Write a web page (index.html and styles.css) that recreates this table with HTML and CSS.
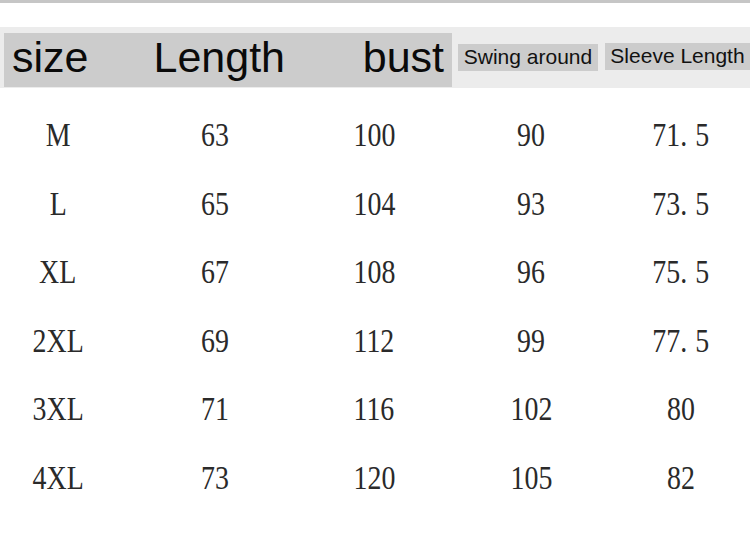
FILE: index.html
```html
<!DOCTYPE html>
<html>
<head>
<meta charset="utf-8">
<link rel="stylesheet" href="styles.css">
</head>
<body>
<div class="topline"></div>
<div class="header">
  <div class="bigbox">
    <span class="h-size">size</span>
    <span class="h-length">Length</span>
    <span class="h-bust">bust</span>
  </div>
  <div class="smallbox swing">Swing around</div>
  <div class="smallbox sleeve">Sleeve Length</div>
</div>
<div class="table">
  <div class="cell"><span>M</span></div><div class="cell"><span>63</span></div><div class="cell"><span>100</span></div><div class="cell"><span>90</span></div><div class="cell"><span>71<i class="dot">.</i>5</span></div>
  <div class="cell"><span>L</span></div><div class="cell"><span>65</span></div><div class="cell"><span>104</span></div><div class="cell"><span>93</span></div><div class="cell"><span>73<i class="dot">.</i>5</span></div>
  <div class="cell"><span>XL</span></div><div class="cell"><span>67</span></div><div class="cell"><span>108</span></div><div class="cell"><span>96</span></div><div class="cell"><span>75<i class="dot">.</i>5</span></div>
  <div class="cell"><span>2XL</span></div><div class="cell"><span>69</span></div><div class="cell"><span>112</span></div><div class="cell"><span>99</span></div><div class="cell"><span>77<i class="dot">.</i>5</span></div>
  <div class="cell"><span>3XL</span></div><div class="cell"><span>71</span></div><div class="cell"><span>116</span></div><div class="cell"><span>102</span></div><div class="cell"><span>80</span></div>
  <div class="cell"><span>4XL</span></div><div class="cell"><span>73</span></div><div class="cell"><span>120</span></div><div class="cell"><span>105</span></div><div class="cell"><span>82</span></div>
</div>
</body>
</html>
```
FILE: styles.css
```css
html, body {
  margin: 0;
  padding: 0;
  background: #ffffff;
}
body {
  width: 750px;
  height: 539px;
  overflow: hidden;
  font-family: "Liberation Sans", Arial, sans-serif;
}
.topline {
  height: 3px;
  background: #c6c6c6;
}
.header {
  margin-top: 24px;
  height: 61px;
  background: #ececec;
  display: flex;
  align-items: flex-start;
  padding: 6px 0 0 4px;
  box-sizing: border-box;
}
.bigbox {
  width: 448px;
  height: 54px;
  background: #cccccc;
  display: flex;
  font-size: 43px;
  line-height: 48px;
  color: #0a0a0a;
  padding: 0 8px;
  box-sizing: border-box;
}
.h-length {
  margin-left: 65px;
}
.h-bust {
  margin-left: auto;
}
.smallbox {
  height: 27px;
  background: #cccccc;
  font-size: 21px;
  line-height: 25px;
  color: #111;
  text-align: center;
  white-space: nowrap;
}
.swing {
  width: 140px;
  margin-left: 6px;
  margin-top: 11px;
}
.sleeve {
  width: 145px;
  margin-left: 7px;
  margin-top: 10px;
}
.table {
  margin-top: 13px;
  display: grid;
  grid-template-columns: 116px 198px 120px 194px 106px;
  grid-auto-rows: 68.5px;
  font-family: "Liberation Serif", "Times New Roman", serif;
  font-size: 34px;
  line-height: 68.5px;
  color: #2a2a2a;
}
.cell {
  text-align: center;
}
.cell span {
  display: inline-block;
  transform: scaleX(0.82);
}
.dot {
  font-style: normal;
  margin-right: 10px;
}
```
